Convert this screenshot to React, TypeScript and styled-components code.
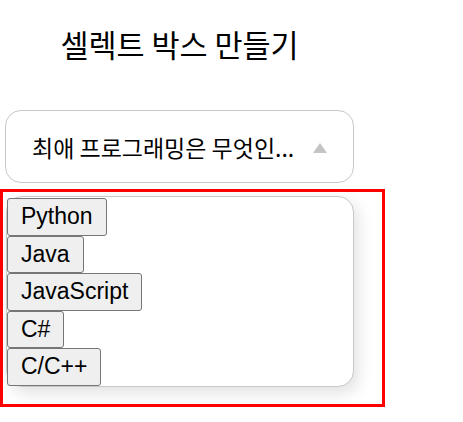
import * as React from 'react';
import styled, { createGlobalStyle } from 'styled-components';

const GlobalStyle = createGlobalStyle`
  body {
    margin: 0;
    background: #ffffff;
    font-family: "Noto Sans CJK KR", "Noto Sans", sans-serif;
    color: #000000;
  }
`;

const StyledPage = styled.div`
  display: flex;
  flex-direction: column;
  align-items: flex-start;
`;

const StyledTitle = styled.h1`
  width: 349px;
  margin: 21px 0 43px 5px;
  font-size: 30.5px;
  font-weight: 400;
  line-height: 46px;
  text-align: center;
`;

const StyledSelectBox = styled.div`
  box-sizing: border-box;
  width: 349px;
  height: 73px;
  margin-left: 5px;
  padding: 0 26px;
  display: flex;
  align-items: center;
  justify-content: space-between;
  border: 1px solid #c8c8c8;
  border-radius: 16px;
  background: #ffffff;
`;

const StyledLabel = styled.span`
  font-size: 23px;
  white-space: nowrap;
`;

const StyledArrow = styled.span`
  width: 0;
  height: 0;
  margin-top: 3px;
  border-left: 7.5px solid transparent;
  border-right: 7.5px solid transparent;
  border-bottom: 10px solid #c4c4c4;
`;

const StyledOutline = styled.div`
  box-sizing: border-box;
  width: 385px;
  margin-top: 6px;
  padding: 4px 0 17px 3px;
  border: 3px solid #ff0000;
`;

const StyledOptionList = styled.ul`
  box-sizing: border-box;
  width: 348px;
  margin: 0;
  padding: 1px 0 0;
  list-style: none;
  display: flex;
  flex-direction: column;
  align-items: flex-start;
  border: 1px solid #c8c8c8;
  border-radius: 16px;
  background: #ffffff;
  box-shadow: 4px 6px 16px rgba(0, 0, 0, 0.12);
`;

const StyledOptionButton = styled.button`
  display: block;
  margin: 0;
  padding: 5px 13px;
  font-family: "Liberation Sans", Arial, sans-serif;
  font-size: 23px;
  line-height: 25.5px;
  color: #000000;
  background: #efefef;
  border: 1px solid #767676;
  border-radius: 3px;
`;

const languages = ['Python', 'Java', 'JavaScript', 'C#', 'C/C++'];

export default function App() {
  return (
    <StyledPage>
      <GlobalStyle />
      <StyledTitle>셀렉트 박스 만들기</StyledTitle>
      <StyledSelectBox>
        <StyledLabel>최애 프로그래밍은 무엇인...</StyledLabel>
        <StyledArrow />
      </StyledSelectBox>
      <StyledOutline>
        <StyledOptionList>
          {languages.map((lang) => (
            <li key={lang}>
              <StyledOptionButton>{lang}</StyledOptionButton>
            </li>
          ))}
        </StyledOptionList>
      </StyledOutline>
    </StyledPage>
  );
}
